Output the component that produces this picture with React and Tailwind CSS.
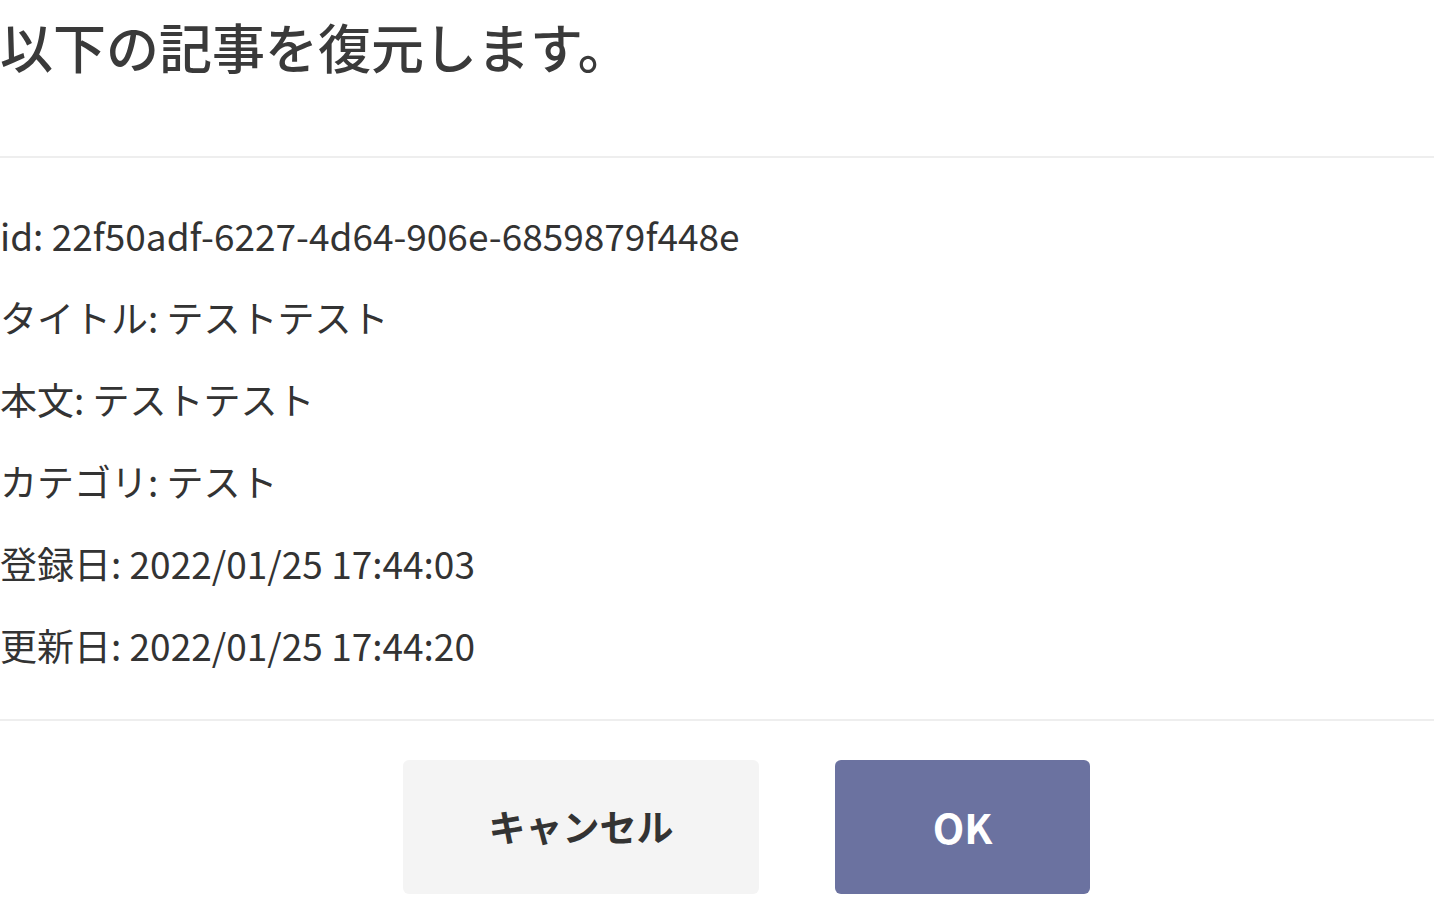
import React from 'react';

const rows = [
  'id: 22f50adf-6227-4d64-906e-6859879f448e',
  'タイトル: テストテスト',
  '本文: テストテスト',
  'カテゴリ: テスト',
  '登録日: 2022/01/25 17:44:03',
  '更新日: 2022/01/25 17:44:20',
];

export default function App() {
  return (
    <div
      className="min-h-screen bg-white text-[#333]"
      style={{ fontFamily: '"Noto Sans CJK JP", "Noto Sans", sans-serif' }}
    >
      {/* Header */}
      <div className="h-[156px] pt-[7px]">
        <h1 className="text-[53px] leading-[78px] font-medium text-[#3a3a3a]">以下の記事を復元します。</h1>
      </div>
      <div className="h-[2px] bg-[#eeeeee]" />

      {/* Body */}
      <div className="pt-[36px] pb-[33px] flex flex-col">
        {rows.map((r) => (
          <p key={r} className="text-[37px] leading-[82px]">{r}</p>
        ))}
      </div>
      <div className="h-[2px] bg-[#eeeeee]" />

      {/* Footer */}
      <div className="pt-[39px] pl-[403px] flex gap-[76px]">
        <button className="w-[356px] h-[134px] rounded-[6px] bg-[#f4f4f4] text-[37px] font-semibold text-[#333]">
          キャンセル
        </button>
        <button className="w-[255px] h-[134px] rounded-[6px] bg-[#6b72a0] text-[41px] font-bold text-white">
          OK
        </button>
      </div>
    </div>
  );
}
